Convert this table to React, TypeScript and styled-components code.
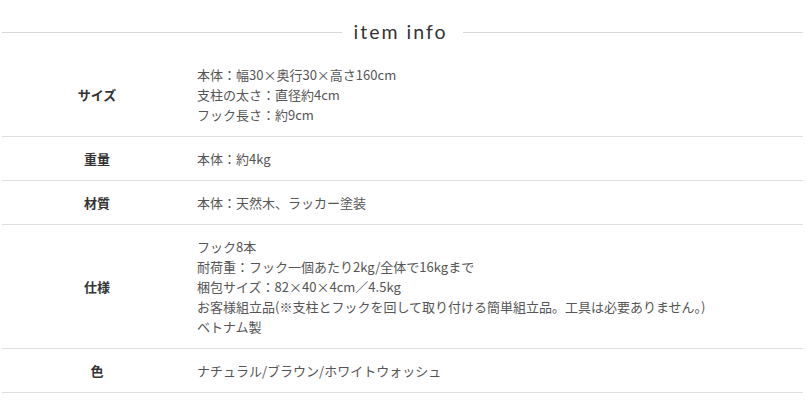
import React from 'react';
import styled, { createGlobalStyle } from 'styled-components';

interface SpecRow {
  label: string;
  lines: string[];
}

const specs: SpecRow[] = [
  {
    label: 'サイズ',
    lines: ['本体：幅30×奥行30×高さ160cm', '支柱の太さ：直径約4cm', 'フック長さ：約9cm'],
  },
  { label: '重量', lines: ['本体：約4kg'] },
  { label: '材質', lines: ['本体：天然木、ラッカー塗装'] },
  {
    label: '仕様',
    lines: [
      'フック8本',
      '耐荷重：フック一個あたり2kg/全体で16kgまで',
      '梱包サイズ：82×40×4cm／4.5kg',
      'お客様組立品(※支柱とフックを回して取り付ける簡単組立品。工具は必要ありません。)',
      'ベトナム製',
    ],
  },
  { label: '色', lines: ['ナチュラル/ブラウン/ホワイトウォッシュ'] },
];

const GlobalStyle = createGlobalStyle`
  html, body {
    margin: 0;
    padding: 0;
    background: #fff;
  }
  body {
    font-family: "Noto Sans CJK JP", "Noto Sans", sans-serif;
    color: #555;
  }
`;

const Wrapper = styled.section`
  margin: 0 4px 0 2px;
  padding-top: 19px;
`;

const Heading = styled.div`
  display: flex;
  align-items: center;
  gap: 12px;
  height: 26px;
  margin-bottom: 8px;
`;

const Rule = styled.span`
  flex: 1;
  height: 1px;
  background: #d9d9d9;
`;

const Title = styled.h2`
  margin: 0;
  padding-right: 4px;
  font-family: "Lato", "DejaVu Sans", sans-serif;
  font-weight: 400;
  font-size: 19.5px;
  letter-spacing: 2px;
  color: #333;
  line-height: 26px;
`;

const Table = styled.div`
  display: flex;
  flex-direction: column;
`;

const Row = styled.div`
  display: grid;
  grid-template-columns: 190px 1fr;
  align-items: center;
  padding: 11.5px 0;
  border-bottom: 1px solid #dedede;
`;

const Label = styled.div`
  text-align: center;
  font-size: 13px;
  font-weight: 700;
  color: #333;
  line-height: 20px;
`;

const Value = styled.div`
  padding-left: 5px;
  font-size: 13px;
  line-height: 20px;
  color: #555;
`;

export default function App() {
  return (
    <>
      <GlobalStyle />
      <Wrapper>
        <Heading>
          <Rule />
          <Title>item info</Title>
          <Rule />
        </Heading>
        <Table>
          {specs.map((row) => (
            <Row key={row.label}>
              <Label>{row.label}</Label>
              <Value>
                {row.lines.map((line) => (
                  <div key={line}>{line}</div>
                ))}
              </Value>
            </Row>
          ))}
        </Table>
      </Wrapper>
    </>
  );
}
